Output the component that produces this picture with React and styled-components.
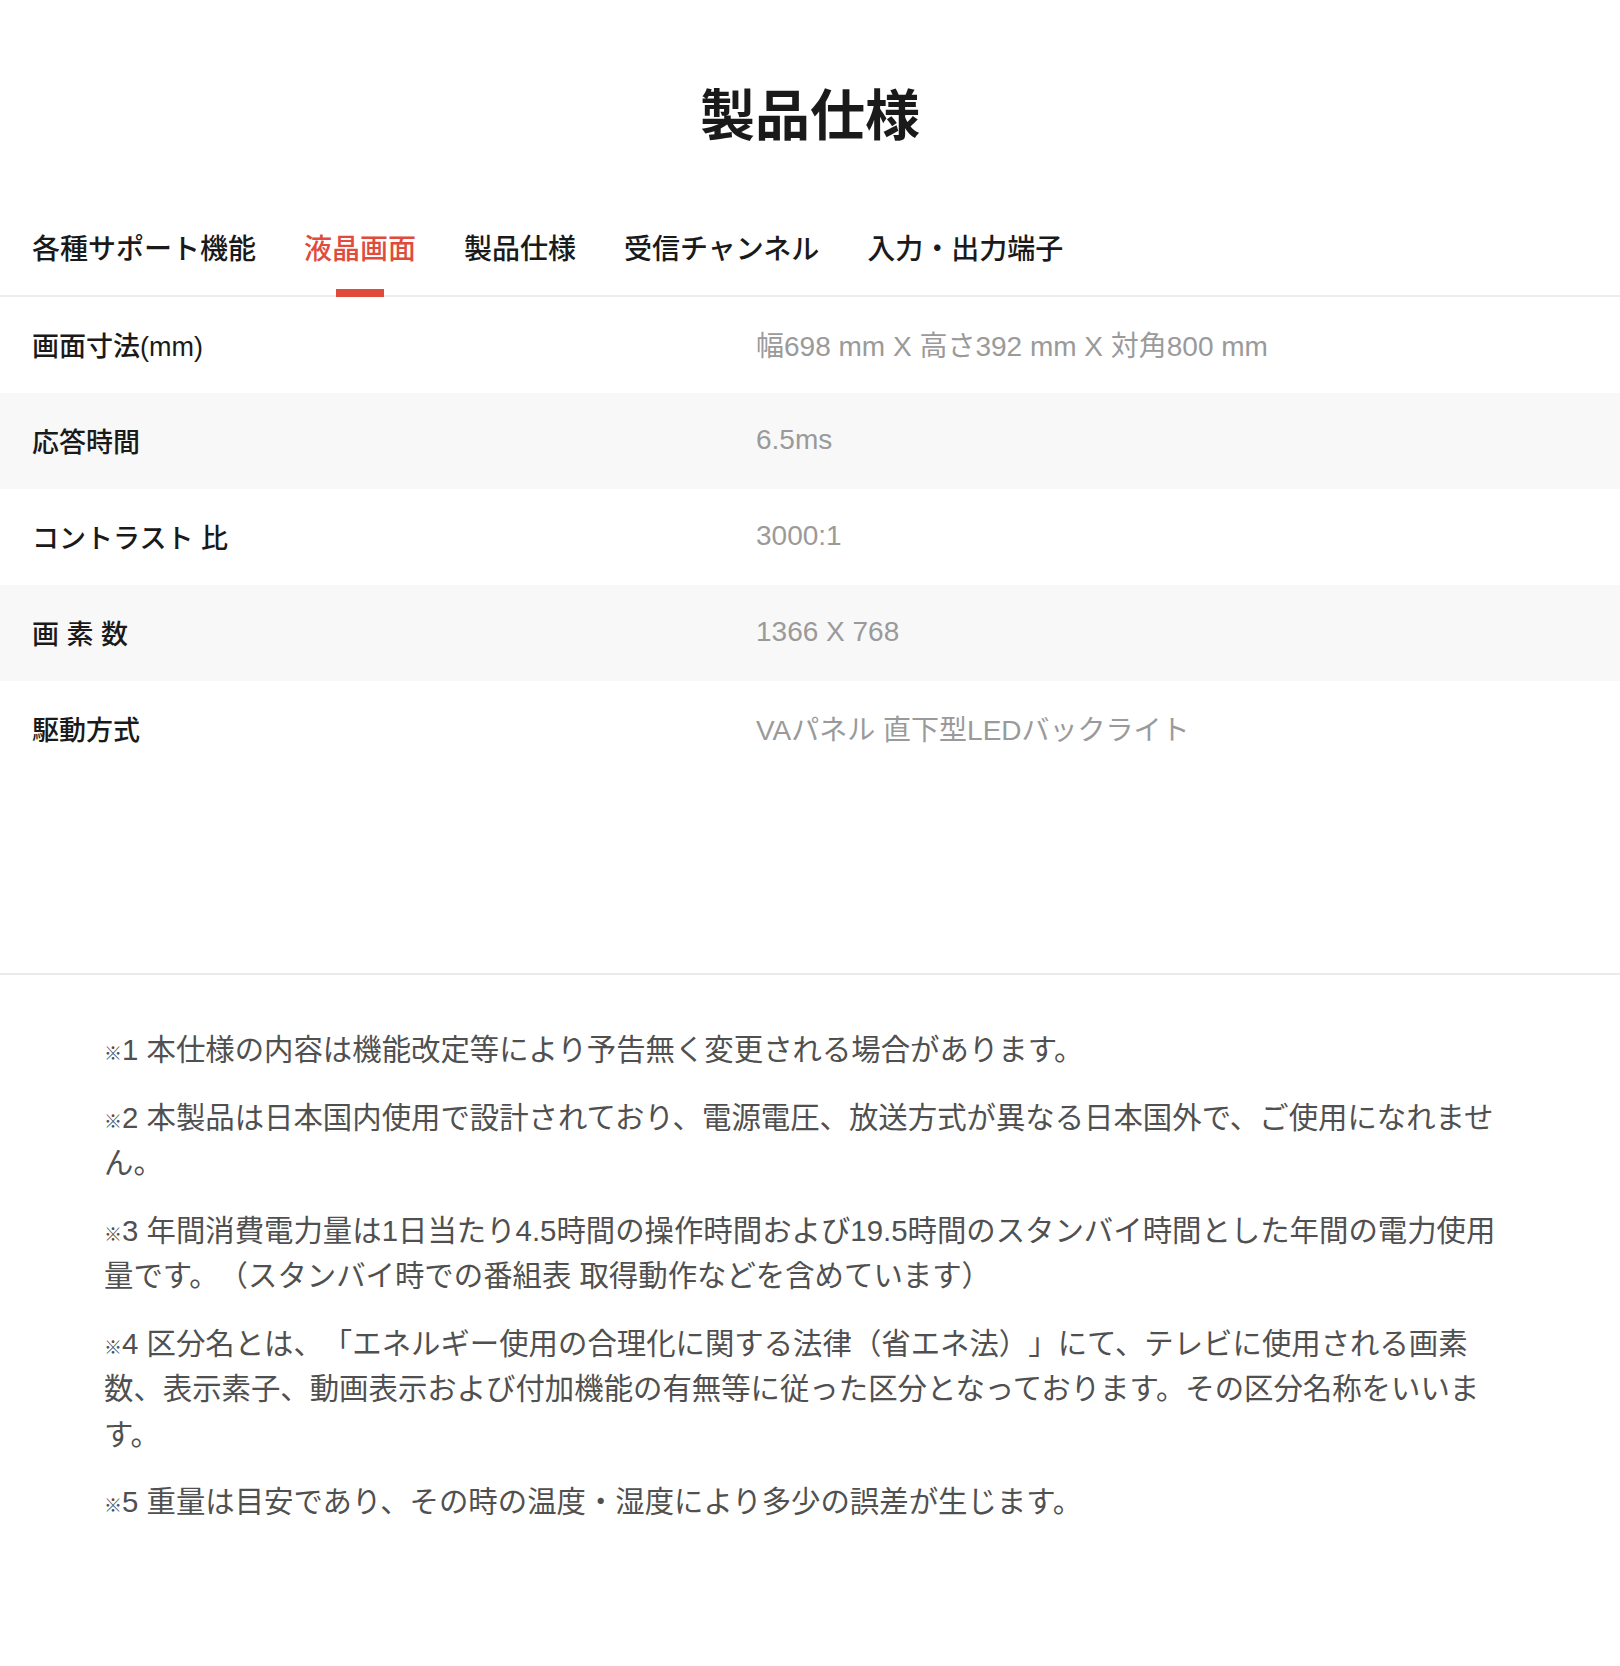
import React from 'react'
import styled, { createGlobalStyle } from 'styled-components'

const GlobalStyle = createGlobalStyle`
    html, body {
        margin: 0;
        padding: 0;
        background: #fff;
    }
    body {
        font-family: "Liberation Sans", "Noto Sans CJK JP", sans-serif;
        color: #1a1a1a;
        text-spacing-trim: space-all;
    }
`

const tabs = ['各種サポート機能', '液晶画面', '製品仕様', '受信チャンネル', '入力・出力端子']

const specs = [
    { label: '画面寸法(mm)', value: '幅698 mm X 高さ392 mm X 対角800 mm' },
    { label: '応答時間', value: '6.5ms' },
    { label: 'コントラスト 比', value: '3000:1' },
    { label: '画 素 数', value: '1366 X 768' },
    { label: '駆動方式', value: 'VAパネル 直下型LEDバックライト' },
]

const notes = [
    '本仕様の内容は機能改定等により予告無く変更される場合があります。',
    '本製品は日本国内使用で設計されており、電源電圧、放送方式が異なる日本国外で、ご使用になれません。',
    '年間消費電力量は1日当たり4.5時間の操作時間および19.5時間のスタンバイ時間とした年間の電力使用量です。（スタンバイ時での番組表 取得動作などを含めています）',
    '区分名とは、「エネルギー使用の合理化に関する法律（省エネ法）」にて、テレビに使用される画素数、表示素子、動画表示および付加機能の有無等に従った区分となっております。その区分名称をいいます。',
    '重量は目安であり、その時の温度・湿度により多少の誤差が生じます。',
]

function App() {
    return (
        <Page>
            <GlobalStyle />
            <Title>製品仕様</Title>
            <TabBar>
                {tabs.map((t) => (
                    <Tab key={t} active={t === '液晶画面'}>{t}</Tab>
                ))}
            </TabBar>
            <SpecList>
                {specs.map((s, i) => (
                    <SpecRow key={s.label} striped={i % 2 === 1}>
                        <Label>{s.label}</Label>
                        <Value>{s.value}</Value>
                    </SpecRow>
                ))}
            </SpecList>
            <Notes>
                {notes.map((n, i) => (
                    <Note key={i}>
                        <Mark>※</Mark>{i + 1} {n}
                    </Note>
                ))}
            </Notes>
        </Page>
    )
}

export default App

const Page = styled.div`
    min-height: 1666px;
    display: flex;
    flex-direction: column;
`

const Title = styled.h1`
    margin: 0;
    padding-top: 80px;
    font-size: 55px;
    line-height: 72px;
    font-weight: 700;
    text-align: center;
    color: #1a1a1a;
`

const TabBar = styled.div`
    margin-top: 78px;
    display: flex;
    gap: 48px;
    padding: 0 32px;
    border-bottom: 2px solid #ededed;
`

const Tab = styled.div`
    position: relative;
    font-size: 28px;
    line-height: 40px;
    font-weight: 500;
    padding-bottom: 25px;
    color: ${(p) => (p.active ? '#e04b3c' : '#1a1a1a')};
    white-space: nowrap;

    &::after {
        content: "";
        display: ${(p) => (p.active ? 'block' : 'none')};
        position: absolute;
        left: 50%;
        bottom: -2px;
        width: 48px;
        height: 8px;
        margin-left: -24px;
        background: #e04b3c;
    }
`

const SpecList = styled.div`
    display: flex;
    flex-direction: column;
    padding-bottom: 196px;
    border-bottom: 2px solid #ebebeb;
`

const SpecRow = styled.div`
    display: grid;
    grid-template-columns: 724px 1fr;
    align-items: center;
    height: 96px;
    padding-left: 32px;
    padding-bottom: 2px;
    box-sizing: border-box;
    background: ${(p) => (p.striped ? '#f8f8f8' : '#fff')};
`

const Label = styled.div`
    font-size: 27px;
    font-weight: 500;
    color: #1a1a1a;
    white-space: pre;
`

const Value = styled.div`
    font-size: 28px;
    color: #9a9a9a;
`

const Notes = styled.div`
    padding: 52px 104px 0;
    display: flex;
    flex-direction: column;
    gap: 22px;
`

const Note = styled.p`
    margin: 0;
    font-size: 29.4px;
    line-height: 45.5px;
    color: #505050;
`

const Mark = styled.span`
    font-size: 18px;
    line-height: 1;
`
